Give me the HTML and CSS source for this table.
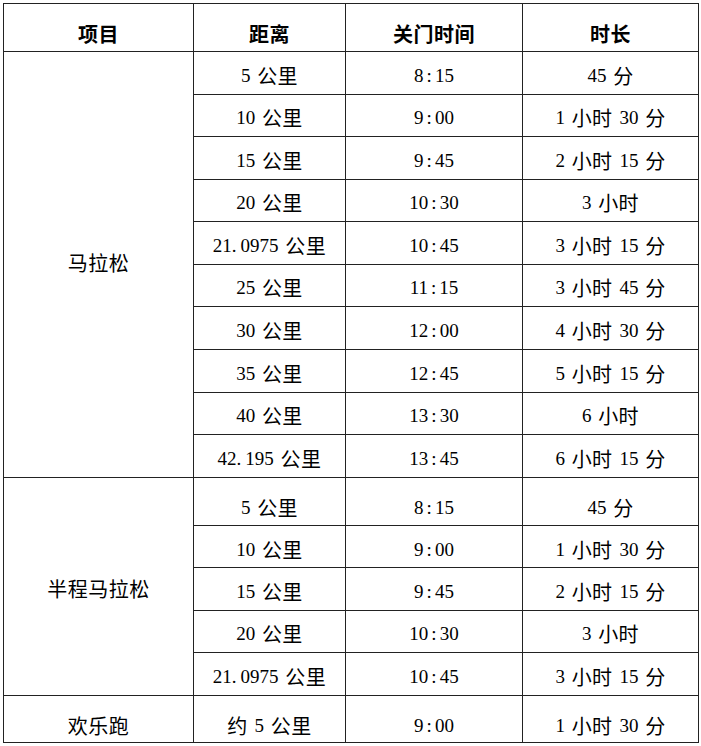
FILE: index.html
```html
<!DOCTYPE html>
<html lang="zh-CN">
<head>
<meta charset="utf-8">
<title>关门时间</title>
<link rel="stylesheet" href="styles.css">
</head>
<body>
<div class="page">
  <div class="table">
    <div class="cell head"><span class="zh">项目</span></div>
    <div class="cell head"><span class="zh">距离</span></div>
    <div class="cell head"><span class="zh">关门时间</span></div>
    <div class="cell head"><span class="zh">时长</span></div>

    <div class="cell span-m"><span class="zh">马拉松</span></div>
    <div class="cell">5 <span class="zh">公里</span></div>
    <div class="cell">8<span class="colon">:</span>15</div>
    <div class="cell">45 <span class="zh">分</span></div>

    <div class="cell">10 <span class="zh">公里</span></div>
    <div class="cell">9<span class="colon">:</span>00</div>
    <div class="cell">1 <span class="zh">小时</span> 30 <span class="zh">分</span></div>

    <div class="cell">15 <span class="zh">公里</span></div>
    <div class="cell">9<span class="colon">:</span>45</div>
    <div class="cell">2 <span class="zh">小时</span> 15 <span class="zh">分</span></div>

    <div class="cell">20 <span class="zh">公里</span></div>
    <div class="cell">10<span class="colon">:</span>30</div>
    <div class="cell">3 <span class="zh">小时</span></div>

    <div class="cell">21<span class="dot">.</span>0975 <span class="zh">公里</span></div>
    <div class="cell">10<span class="colon">:</span>45</div>
    <div class="cell">3 <span class="zh">小时</span> 15 <span class="zh">分</span></div>

    <div class="cell">25 <span class="zh">公里</span></div>
    <div class="cell">11<span class="colon">:</span>15</div>
    <div class="cell">3 <span class="zh">小时</span> 45 <span class="zh">分</span></div>

    <div class="cell">30 <span class="zh">公里</span></div>
    <div class="cell">12<span class="colon">:</span>00</div>
    <div class="cell">4 <span class="zh">小时</span> 30 <span class="zh">分</span></div>

    <div class="cell">35 <span class="zh">公里</span></div>
    <div class="cell">12<span class="colon">:</span>45</div>
    <div class="cell">5 <span class="zh">小时</span> 15 <span class="zh">分</span></div>

    <div class="cell">40 <span class="zh">公里</span></div>
    <div class="cell">13<span class="colon">:</span>30</div>
    <div class="cell">6 <span class="zh">小时</span></div>

    <div class="cell">42<span class="dot">.</span>195 <span class="zh">公里</span></div>
    <div class="cell">13<span class="colon">:</span>45</div>
    <div class="cell">6 <span class="zh">小时</span> 15 <span class="zh">分</span></div>

    <div class="cell span-h"><span class="zh">半程马拉松</span></div>
    <div class="cell first-h">5 <span class="zh">公里</span></div>
    <div class="cell first-h">8<span class="colon">:</span>15</div>
    <div class="cell first-h">45 <span class="zh">分</span></div>

    <div class="cell second-h">10 <span class="zh">公里</span></div>
    <div class="cell second-h">9<span class="colon">:</span>00</div>
    <div class="cell second-h">1 <span class="zh">小时</span> 30 <span class="zh">分</span></div>

    <div class="cell">15 <span class="zh">公里</span></div>
    <div class="cell">9<span class="colon">:</span>45</div>
    <div class="cell">2 <span class="zh">小时</span> 15 <span class="zh">分</span></div>

    <div class="cell">20 <span class="zh">公里</span></div>
    <div class="cell">10<span class="colon">:</span>30</div>
    <div class="cell">3 <span class="zh">小时</span></div>

    <div class="cell">21<span class="dot">.</span>0975 <span class="zh">公里</span></div>
    <div class="cell">10<span class="colon">:</span>45</div>
    <div class="cell">3 <span class="zh">小时</span> 15 <span class="zh">分</span></div>

    <div class="cell last"><span class="zh">欢乐跑</span></div>
    <div class="cell last"><span class="zh">约</span> 5 <span class="zh">公里</span></div>
    <div class="cell last">9<span class="colon">:</span>00</div>
    <div class="cell last">1 <span class="zh">小时</span> 30 <span class="zh">分</span></div>
  </div>
</div>
</body>
</html>
```

FILE: styles.css
```css
html, body {
  margin: 0;
  padding: 0;
  background: #ffffff;
}

.page {
  padding: 3px 0 0 3px;
}

.table {
  display: grid;
  width: max-content;
  grid-template-columns: 189px 151px 176px 175px;
  grid-template-rows: 47px 42px 41px 42px 41px 42px 41px 42px 42px 41px 42px 47px 41px 42px 41px 42px 46px;
  gap: 1px;
  padding: 1px;
  background: #222222;
  font-family: "Liberation Serif", "Noto Sans CJK SC", serif;
  font-size: 19px;
  line-height: 24px;
  color: #000000;
}

.cell {
  box-sizing: border-box;
  background: #ffffff;
  display: flex;
  align-items: center;
  justify-content: center;
  padding-top: 5px;
  white-space: pre;
  word-spacing: 2px;
}

.zh {
  font-family: "Noto Sans CJK SC", sans-serif;
  font-size: 20px;
  line-height: 16px;
  letter-spacing: 0.5px;
}

.colon {
  margin: 0 3px;
}

.dot {
  margin-right: 4px;
}

.head {
  padding-top: 12px;
}

.head .zh {
  font-weight: 600;
}

.span-m {
  grid-row: span 10;
  padding-top: 0;
  padding-bottom: 4px;
}

.span-h {
  grid-row: span 5;
  padding-top: 4px;
}

.first-h {
  padding-top: 12px;
}

.second-h {
  padding-top: 6px;
}

.last {
  padding-top: 13px;
}
```
